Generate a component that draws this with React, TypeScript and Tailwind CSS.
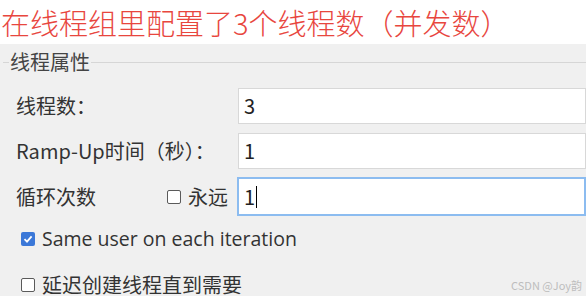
import React from 'react';

const cjk = { fontFamily: '"Noto Sans CJK SC", "Noto Sans", sans-serif' };

const Box = ({ checked }: { checked?: boolean }) =>
  checked ? (
    <span className="flex h-[14px] w-[14px] items-center justify-center rounded-[2px] bg-[#3b78d8]">
      <svg width="10" height="10" viewBox="0 0 10 10">
        <path d="M1.5 5.2 L4 7.6 L8.6 2.4" stroke="#fff" strokeWidth="1.8" fill="none" />
      </svg>
    </span>
  ) : (
    <span className="h-[14px] w-[14px] rounded-[2px] border border-[#5a5a5a] bg-white" />
  );

const Field = ({ value, focused }: { value: string; focused?: boolean }) => (
  <div
    className={
      'flex flex-1 items-center pl-[5px] text-[20px] text-[#222] ' +
      (focused ? 'h-[39px] border-2 border-[#8cbcf0] bg-white' : 'h-[36px] border border-[#d8d8d8] bg-white')
    }
  >
    <span>{value}</span>
    {focused && <span className="ml-[1px] h-[22px] w-[1px] bg-black" />}
  </div>
);

export default function App() {
  return (
    <div className="relative h-[296px] w-[586px] overflow-hidden bg-[#f0f0f0] text-[#333]" style={cjk}>
      <div className="flex h-[44px] items-center bg-white pl-[1px] text-[29px] font-light leading-none text-[#e8463e]">
        在线程组里配置了3个线程数（并发数）
      </div>

      <div className="mt-[7px] flex items-center pl-[3px]">
        <span className="h-px w-[6px] bg-[#d6d6d6]" />
        <span className="px-[1px] text-[20px] leading-[22px] text-[#444]">线程属性</span>
        <span className="h-px flex-1 bg-[#d6d6d6]" />
      </div>

      <div className="mt-[15px] flex items-center">
        <span className="w-[238px] pl-[16px] text-[20px]">线程数：</span>
        <Field value="3" />
      </div>

      <div className="mt-[9px] flex items-center">
        <span className="w-[238px] pl-[16px] text-[20px]">Ramp-Up时间（秒）：</span>
        <Field value="1" />
      </div>

      <div className="mt-[8px] flex items-center">
        <div className="flex w-[237px] items-center pl-[16px]">
          <span className="text-[20px]">循环次数</span>
          <div className="ml-auto mr-[9px] flex items-center gap-[7px]">
            <Box />
            <span className="text-[20px]">永远</span>
          </div>
        </div>
        <Field value="1" focused />
      </div>

      <div className="mt-[11px] flex h-[24px] items-center gap-[7px] pl-[21px]">
        <Box checked />
        <span
          className="text-[19.5px] leading-[24px]"
          style={{ fontFamily: '"Open Sans", "Noto Sans", sans-serif' }}
        >
          Same user on each iteration
        </span>
      </div>

      <div className="mt-[22px] flex h-[24px] items-center gap-[7px] pl-[21px]">
        <Box />
        <span className="text-[20px] leading-[24px]">延迟创建线程直到需要</span>
      </div>

      <span className="absolute bottom-[5px] right-[4px] text-[11px] leading-none text-[#bdbdbd]">CSDN @Joy韵</span>
    </div>
  );
}
